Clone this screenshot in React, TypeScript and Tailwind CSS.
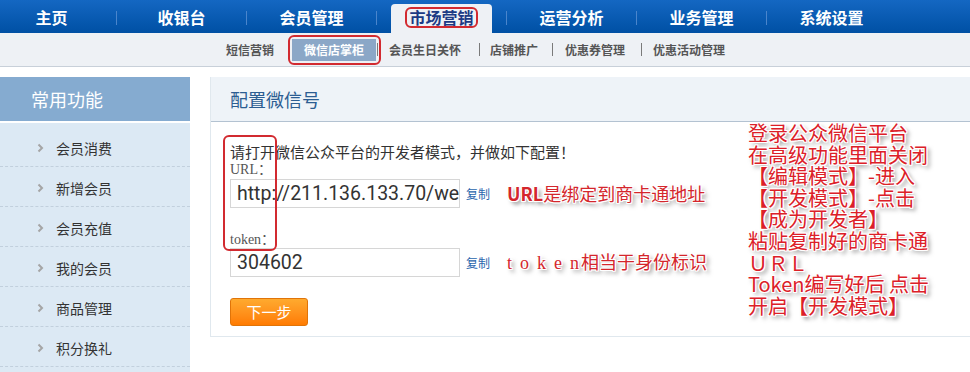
import React, { Fragment } from "react";

const navs = ["主页", "收银台", "会员管理", "市场营销", "运营分析", "业务管理", "系统设置"];
const sideItems = ["会员消费", "新增会员", "会员充值", "我的会员", "商品管理", "积分换礼"];
const outline =
  "[text-shadow:1px_0_0_#fff,-1px_0_0_#fff,0_1px_0_#fff,0_-1px_0_#fff,1px_1px_0_#fff,-1px_-1px_0_#fff,1px_-1px_0_#fff,-1px_1px_0_#fff,3px_3px_4px_#7a7a7a]";

function SubSep({ cls }: { cls: string }) {
  return <div className={`w-px h-[13px] bg-[#7a7a7a] ${cls}`} />;
}

export default function App() {
  return (
    <div className="relative w-[970px] h-[372px] overflow-hidden bg-white [font-family:'Noto_Sans_CJK_SC',sans-serif]">
      {/* top nav */}
      <div className="h-[33px] bg-gradient-to-b from-[#1467c2] to-[#0050a4] flex ml-[-13px]">
        {navs.map((n, i) => (
          <Fragment key={n}>
            {i > 0 && <div className="w-px h-[14px] self-center mt-[2px] bg-[#4a85cc]" />}
            {n === "市场营销" ? (
              <div className="w-[129px] flex justify-center items-end">
                <div className="w-[101px] h-[29px] bg-[#eef1f5] rounded-t-[4px] flex items-center justify-center pb-[2px]">
                  <span className="border-2 border-[#d22a30] rounded-[6px] px-[2px] leading-[17px] text-[#1c3a84] font-bold text-[16px]">
                    市场营销
                  </span>
                </div>
              </div>
            ) : (
              <div className="w-[129px] flex items-center justify-center text-white font-bold text-[16px]">{n}</div>
            )}
          </Fragment>
        ))}
      </div>

      {/* sub nav */}
      <div className="h-[34px] bg-[#eef1f5] border-b border-[#c8d0d9] flex items-center pl-[226px] text-[12px] font-bold text-[#555]">
        <span>短信营销</span>
        <span className="ml-[18px] w-[84px] h-[22px] bg-[#8ba7c7] text-white flex items-center justify-center">微信店掌柜</span>
        <SubSep cls="ml-[1px]" />
        <span className="ml-[11px]">会员生日关怀</span>
        <SubSep cls="ml-[18px]" />
        <span className="ml-[10px]">店铺推广</span>
        <SubSep cls="ml-[14px]" />
        <span className="ml-[12px]">优惠券管理</span>
        <SubSep cls="ml-[16px]" />
        <span className="ml-[11px]">优惠活动管理</span>
      </div>

      {/* content */}
      <div className="flex mt-[10px]">
        {/* sidebar */}
        <div className="w-[190px] shrink-0">
          <div className="h-[44px] bg-[#85abd0] text-white text-[18px] pl-[31px] flex items-center">常用功能</div>
          <div className="mt-[2px] bg-[#dce9f4] pt-[4px] h-[260px]">
            {sideItems.map((s) => (
              <div key={s} className="h-[40px] border-b border-dashed border-[#c2d0dd] flex items-center pl-[37px] pt-[3px]">
                <svg width="7" height="10" viewBox="0 0 7 10">
                  <path d="M1.5 1.5L5 5L1.5 8.5" stroke="#a5a5a5" strokeWidth="2" fill="none" />
                </svg>
                <span className="ml-[12px] text-[14px] text-[#333]">{s}</span>
              </div>
            ))}
          </div>
        </div>

        {/* main panel */}
        <div className="ml-[20px] w-[780px] shrink-0 self-start border-l border-b border-[#e0e8ee]">
          <div className="h-[45px] bg-[#eef3f8] border-b border-[#b3c2d1] flex items-center pl-[19px] text-[18px] text-[#2b5d92]">
            配置微信号
          </div>
          <div className="flex">
            <div className="w-[537px] shrink-0 pl-[19px] pt-[20px] pb-[10px]">
              <div className="text-[15px] leading-[20px] text-[#333]">请打开微信公众平台的开发者模式，并做如下配置！</div>
              <div className="[font-family:'Liberation_Serif','Noto_Sans_CJK_SC',serif] text-[14px] leading-[16px] text-[#555]">URL：</div>
              <div className="mt-[1px] flex items-center">
                <input
                  readOnly
                  value="http://211.136.133.70/weixin/api"
                  className="w-[230px] h-[29px] border border-[#d6d6d6] pl-[6px] text-[19.5px] text-[#333] outline-none bg-white [font-family:Roboto,sans-serif]"
                />
                <span className="ml-[6px] text-[12px] text-[#2a66ad]">复制</span>
                <span className={`ml-[17px] text-[18px] font-bold text-[#d4262c] whitespace-nowrap ${outline}`}>
                  URL<span className="font-normal">是绑定到商卡通地址</span>
                </span>
              </div>
              <div className="mt-[24px] [font-family:'Liberation_Serif','Noto_Sans_CJK_SC',serif] text-[14px] leading-[16px] text-[#555]">token：</div>
              <div className="flex items-center">
                <input
                  readOnly
                  value="304602"
                  className="w-[230px] h-[29px] border border-[#d6d6d6] pl-[6px] text-[19.5px] text-[#333] outline-none bg-white [font-family:Roboto,sans-serif]"
                />
                <span className="ml-[6px] text-[12px] text-[#2a66ad]">复制</span>
                <span className={`ml-[17px] text-[18px] text-[#d4262c] whitespace-nowrap ${outline}`}>
                  <span className="[font-family:'Liberation_Serif',serif] tracking-[8px]">toke</span>
                  <span className="[font-family:'Liberation_Serif',serif] mr-[2px]">n</span>相当于身份标识
                </span>
              </div>
              <button className="mt-[21px] w-[78px] h-[28px] rounded-[3px] border border-[#e07408] bg-gradient-to-b from-[#ffaa2e] to-[#ff7b00] text-white text-[15px] flex items-center justify-center">
                下一步
              </button>
            </div>
            <div className={`text-[20px] leading-[21.6px] text-[#dc2028] whitespace-nowrap ${outline}`}>
              <div>登录公众微信平台</div>
              <div>在高级功能里面关闭</div>
              <div>【编辑模式】-进入</div>
              <div>【开发模式】-点击</div>
              <div>【成为开发者】</div>
              <div>粘贴复制好的商卡通</div>
              <div>ＵＲＬ</div>
              <div>Token编写好后 点击</div>
              <div>开启【开发模式】</div>
            </div>
          </div>
        </div>
      </div>

      {/* annotation outlines */}
      <div className="absolute left-[288px] top-[35px] w-[93px] h-[30px] border-2 border-[#d22a30] rounded-[6px]" />
      <div className="absolute left-[223px] top-[135px] w-[54px] h-[116px] border-2 border-[#d22a30] rounded-[6px]" />
    </div>
  );
}
